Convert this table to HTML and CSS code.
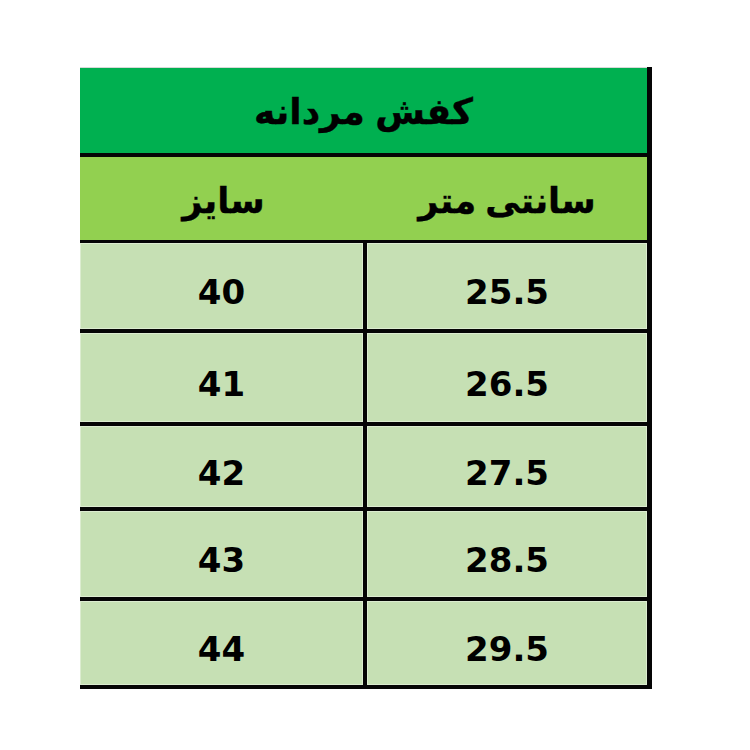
FILE: index.html
```
<!DOCTYPE html>
<html lang="fa">
<head>
<meta charset="utf-8">
<title>کفش مردانه</title>
<link rel="stylesheet" href="styles.css">
</head>
<body>
<div class="sheet">
  <div class="table" dir="rtl">
    <div class="title">کفش مردانه</div>
    <div class="subhead">
      <div class="sh-cell">سانتی متر</div>
      <div class="sh-cell">سایز</div>
    </div>
    <div class="grid">
      <div class="cell">25.5</div><div class="cell">40</div>
      <div class="cell">26.5</div><div class="cell">41</div>
      <div class="cell">27.5</div><div class="cell">42</div>
      <div class="cell">28.5</div><div class="cell">43</div>
      <div class="cell">29.5</div><div class="cell">44</div>
    </div>
  </div>
</div>
</body>
</html>
```
FILE: styles.css
```
html, body {
  margin: 0;
  padding: 0;
  background: #ffffff;
}
.sheet {
  padding: 67px 0 0 80px;
}
.table {
  width: 567px;
  border-right: 5px solid #050505;
  border-bottom: 4px solid #050505;
  background: #050505;
  font-family: "DejaVu Sans", sans-serif;
  font-weight: bold;
  color: #000;
}
.title {
  height: 86px;
  background: #00b050;
  display: flex;
  align-items: center;
  justify-content: center;
  font-size: 36px;
  padding-top: 2px;
  box-sizing: border-box;
  margin-bottom: 4px;
  box-shadow: inset 0 1px 0 #d8d8d8;
  word-spacing: -2px;
  -webkit-text-stroke: 0.4px #000;
}
.subhead {
  height: 83px;
  background: #92d050;
  display: grid;
  grid-template-columns: 280px 287px;
  margin-bottom: 3px;
}
.sh-cell {
  display: flex;
  align-items: center;
  justify-content: center;
  font-size: 35px;
  padding-top: 4px;
  word-spacing: -3px;
  -webkit-text-stroke: 0.4px #000;
}
.grid {
  display: grid;
  grid-template-columns: 280px 283px;
  grid-template-rows: 86px 89px 81px 86px 84px;
  column-gap: 4px;
  row-gap: 4px;
}
.cell {
  background: #c6e0b4;
  box-shadow: inset 0 0 0 1px #dcecd0;
  display: flex;
  align-items: center;
  justify-content: center;
  font-size: 34px;
  padding-top: 12px;
  box-sizing: border-box;
}
```
